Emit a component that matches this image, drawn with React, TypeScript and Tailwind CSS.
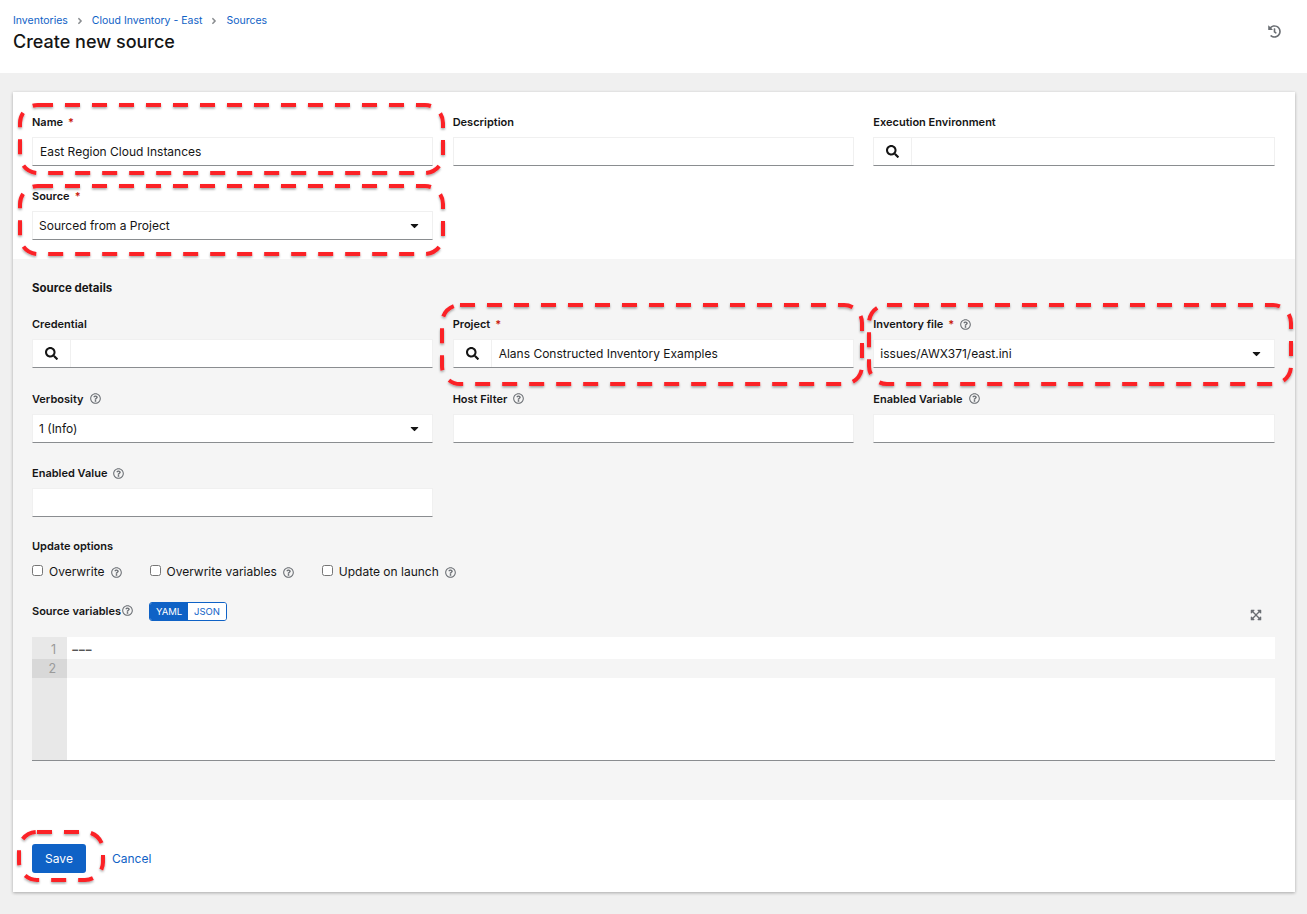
import { ReactNode } from 'react'
import { FaAngleRight, FaCaretDown, FaExpandArrowsAlt, FaHistory, FaRegQuestionCircle, FaSearch } from 'react-icons/fa'

const Help = ({ className = 'ml-[6px]' }: { className?: string }) => (
  <FaRegQuestionCircle className={`${className} text-[11px] text-[#6a6e73]`} />
)

function Label({ text, required, help }: { text: string; required?: boolean; help?: boolean }) {
  return (
    <div className="flex items-center h-4 text-[11px] font-semibold text-[#151515] leading-4">
      <span>{text}</span>
      {required && <span className="ml-[5px] text-[#c9190b]">*</span>}
      {help && <Help />}
    </div>
  )
}

const boxClass = 'h-[29px] bg-white border border-[#f0f0f0] border-b-[#8a8d90] flex items-center text-[12px] text-[#151515]'

function TextField({ label, required, help, value }: { label: string; required?: boolean; help?: boolean; value?: string }) {
  return (
    <div className="flex flex-col gap-[7px]">
      <Label text={label} required={required} help={help} />
      <div className={`${boxClass} px-[7px] pt-[1px]`}>{value}</div>
    </div>
  )
}

function SelectField({ label, required, help, value }: { label: string; required?: boolean; help?: boolean; value: string }) {
  return (
    <div className="flex flex-col gap-[7px]">
      <Label text={label} required={required} help={help} />
      <div className={`${boxClass} justify-between pl-[6px] pr-[11px]`}>
        <span className="pt-[1px]">{value}</span>
        <FaCaretDown className="text-[13px] text-[#151515]" />
      </div>
    </div>
  )
}

function LookupField({ label, required, value }: { label: string; required?: boolean; value?: string }) {
  return (
    <div className="flex flex-col gap-[7px]">
      <Label text={label} required={required} />
      <div className={boxClass}>
        <div className="w-[38px] h-full flex items-center justify-center border-r border-[#f0f0f0] shrink-0">
          <FaSearch className="text-[13px] text-[#151515]" />
        </div>
        <span className="pl-[7px] pt-[1px]">{value}</span>
      </div>
    </div>
  )
}

function Check({ label }: { label: string }) {
  return (
    <label className="flex items-center text-[12px] text-[#151515]">
      <input type="checkbox" className="w-[11px] h-[11px] m-0 -mt-[4px]" />
      <span className="ml-[6px]">{label}</span>
      <Help />
    </label>
  )
}

function Grid({ children, rowGap }: { children: ReactNode; rowGap: string }) {
  return <div className={`grid grid-cols-3 gap-x-[19.25px] ${rowGap}`}>{children}</div>
}

// red dashed call-outs drawn over the form
const callouts = [
  { x: 20, y: 105, w: 423, h: 68 },
  { x: 20, y: 186, w: 423, h: 68 },
  { x: 442, y: 305, w: 420, h: 79 },
  { x: 869, y: 305, w: 422, h: 79 },
  { x: 19, y: 832, w: 84, h: 48 },
]

export default function App() {
  return (
    <div className="relative min-h-[914px] bg-[#f0f0f0] font-['Inter','Noto_Sans',sans-serif]">
      <header className="h-[73px] bg-white px-[13px] pt-[13px] flex justify-between">
        <div>
          <nav className="flex items-center h-[15px] text-[10.5px] text-[#0f62c6]">
            <span>Inventories</span>
            <FaAngleRight className="mx-[7px] text-[10px] text-[#8a8d90]" />
            <span>Cloud Inventory - East</span>
            <FaAngleRight className="mx-[7px] text-[10px] text-[#8a8d90]" />
            <span>Sources</span>
          </nav>
          <h1 className="mt-[1px] text-[18px] leading-[26px] font-medium text-[#151515]">Create new source</h1>
        </div>
        <FaHistory className="mt-[12px] mr-[13px] text-[13px] text-[#6a6e73]" />
      </header>

      <main className="ml-[13px] mr-[12px] mt-[19px] bg-white shadow-[0_1px_3px_rgba(0,0,0,0.3)]">
        <section className="pl-[19px] pr-[20.25px] pt-[22px] pb-[19px]">
          <Grid rowGap="gap-y-[22px]">
            <TextField label="Name" required value="East Region Cloud Instances" />
            <TextField label="Description" />
            <LookupField label="Execution Environment" />
            <SelectField label="Source" required value="Sourced from a Project" />
          </Grid>
        </section>

        <section className="bg-[#f5f5f5] pl-[19px] pr-[20.25px] pt-[21px] pb-[39px]">
          <h2 className="h-4 mb-[20px] text-[11.5px] leading-4 font-bold text-[#151515]">Source details</h2>
          <Grid rowGap="gap-y-[22.5px]">
            <LookupField label="Credential" />
            <LookupField label="Project" required value="Alans Constructed Inventory Examples" />
            <SelectField label="Inventory file" required help value="issues/AWX371/east.ini" />
            <SelectField label="Verbosity" help value="1 (Info)" />
            <TextField label="Host Filter" help />
            <TextField label="Enabled Variable" help />
            <TextField label="Enabled Value" help />
          </Grid>

          <div className="mt-[21px]">
            <Label text="Update options" />
            <div className="mt-[10px] h-4 flex items-center gap-[28px]">
              <Check label="Overwrite" />
              <Check label="Overwrite variables" />
              <Check label="Update on launch" />
            </div>
          </div>

          <div className="mt-[22px] flex items-center h-[19px]">
            <div className="-mt-[2px]">
              <Label text="Source variables" />
            </div>
            <Help className="ml-[1px] -mt-[2px]" />
            <div className="ml-[16px] flex h-[19px] w-[78px] rounded-[3px] border border-[#0f62c6] overflow-hidden text-[9.5px] leading-[17px] text-center">
              <span className="w-[38px] bg-[#0f62c6] text-white">YAML</span>
              <span className="flex-1 bg-white text-[#0f62c6]">JSON</span>
            </div>
            <FaExpandArrowsAlt className="ml-auto mr-[13px] mt-[6px] text-[12px] text-[#6a6e73]" />
          </div>

          <div className="mt-[16px] h-[124px] flex bg-white border-b border-[#8a8d90] text-[12.5px] leading-[19px]">
            <div className="w-[35px] bg-[#e8e8e8] text-[#9a9a9a] text-right">
              <div className="h-[22px] pr-[11px] pt-[3px]">1</div>
              <div className="h-[19px] pr-[11px] bg-[#d8d8d8]">2</div>
            </div>
            <div className="flex-1">
              <div className="h-[22px] pl-[4px] pt-[3px] text-[#555] text-[18px] tracking-[-1.5px]">---</div>
              <div className="h-[19px] bg-[#f5f5f5]" />
            </div>
          </div>
        </section>

        <section className="pl-[19px] pr-[20.25px] pt-[44px] pb-[19px] flex items-center">
          <button className="w-[54px] h-[29px] bg-[#0f62c6] rounded-[3px] text-white text-[12px]">Save</button>
          <a className="ml-[26px] text-[12px] text-[#0f62c6]">Cancel</a>
        </section>
      </main>

      <svg className="absolute inset-0 pointer-events-none" width="1307" height="914">
        <defs>
          <filter id="callout-shadow" x="-5%" y="-10%" width="110%" height="120%">
            <feDropShadow dx="0" dy="1.5" stdDeviation="1.2" floodColor="#000" floodOpacity="0.35" />
          </filter>
        </defs>
        {callouts.map(c => (
          <rect key={c.x + '-' + c.y} x={c.x} y={c.y} width={c.w} height={c.h} rx="18" fill="none" stroke="#fb2028" strokeWidth="4" strokeDasharray="15 12" filter="url(#callout-shadow)" />
        ))}
      </svg>
    </div>
  )
}
